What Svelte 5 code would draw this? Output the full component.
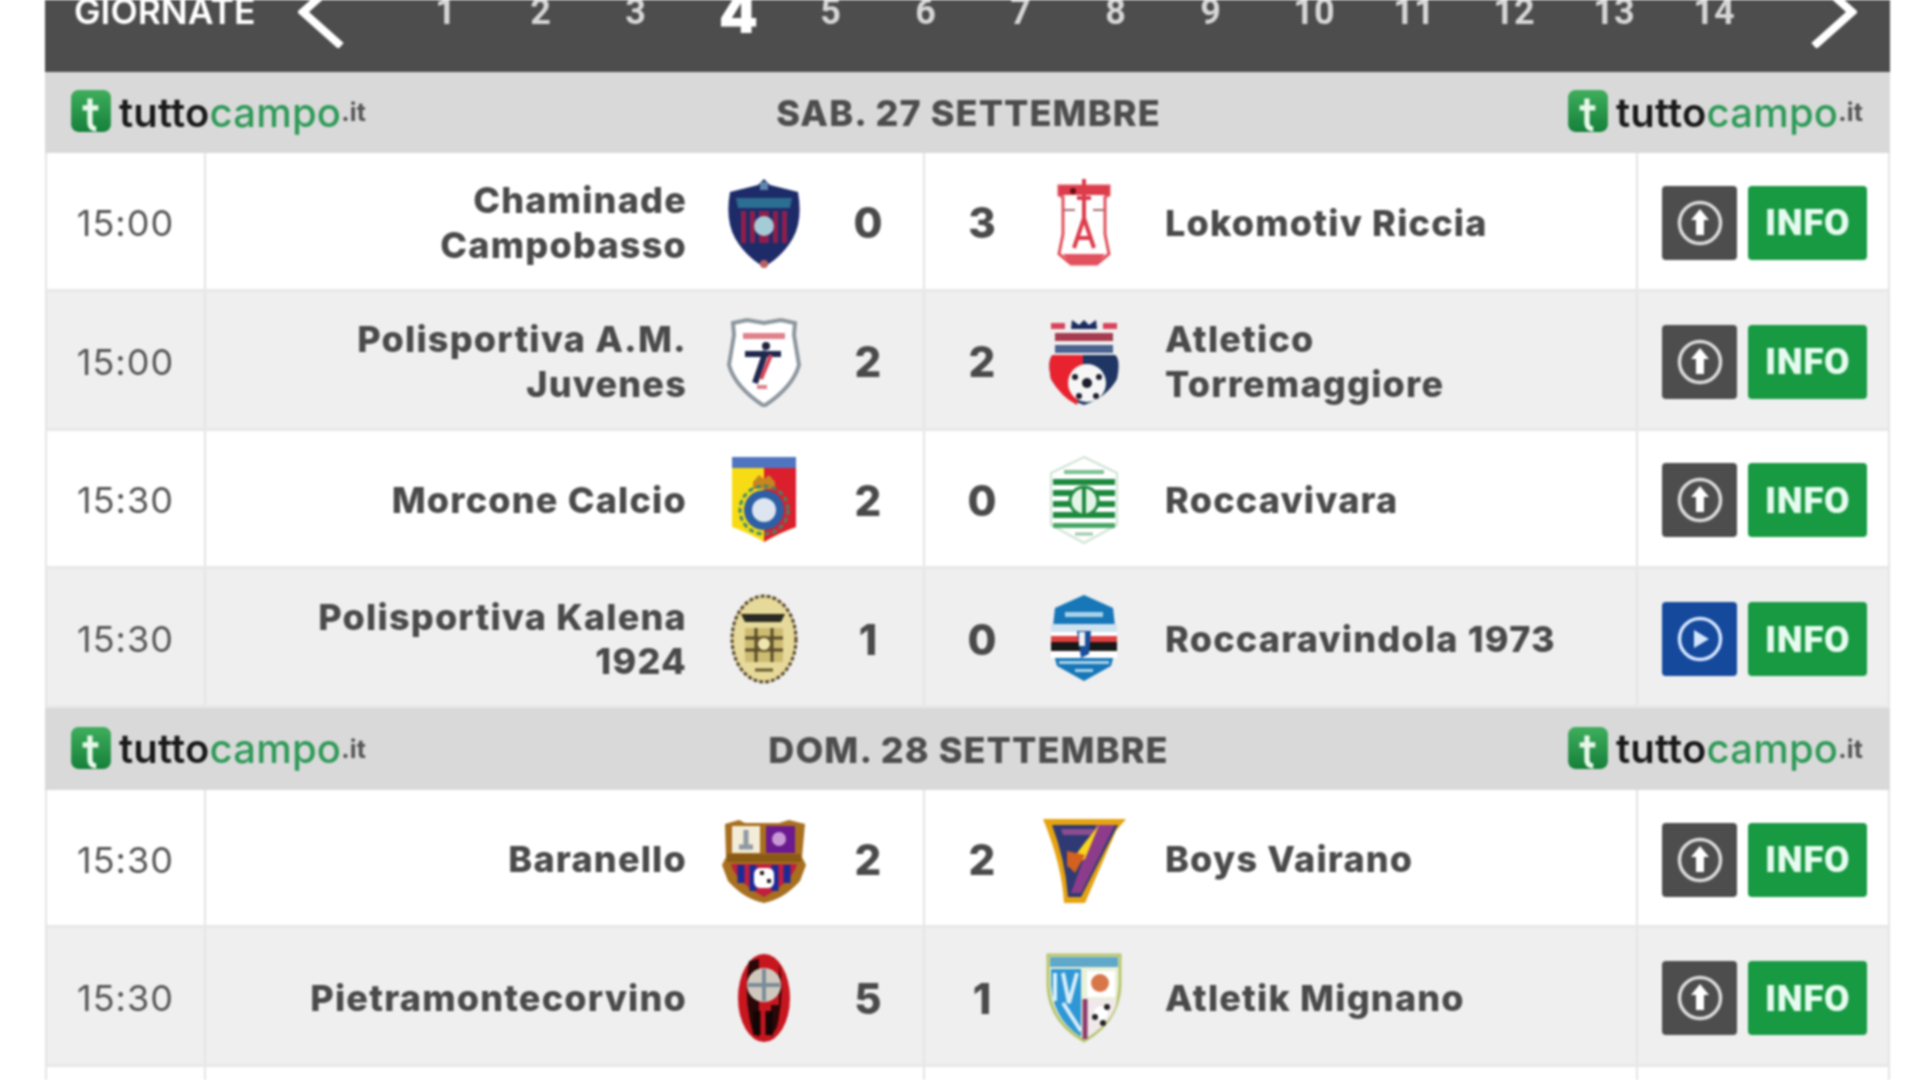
<script>
  const rounds = [1,2,3,4,5,6,7,8,9,10,11,12,13,14];
  const day1 = [
    { time:'15:00', home:['Chaminade','Campobasso'], hs:0, as:3, away:['Lokomotiv Riccia'], hc:'chaminade', ac:'lokomotiv', live:false },
    { time:'15:00', home:['Polisportiva A.M.','Juvenes'], hs:2, as:2, away:['Atletico','Torremaggiore'], hc:'juvenes', ac:'atletico', live:false },
    { time:'15:30', home:['Morcone Calcio'], hs:2, as:0, away:['Roccavivara'], hc:'morcone', ac:'roccavivara', live:false },
    { time:'15:30', home:['Polisportiva Kalena','1924'], hs:1, as:0, away:['Roccaravindola 1973'], hc:'kalena', ac:'roccaravindola', live:true },
  ];
  const day2 = [
    { time:'15:30', home:['Baranello'], hs:2, as:2, away:['Boys Vairano'], hc:'baranello', ac:'boys', live:false },
    { time:'15:30', home:['Pietramontecorvino'], hs:5, as:1, away:['Atletik Mignano'], hc:'pietra', ac:'atletik', live:false },
  ];
</script>

{#snippet logo()}
  <div class="logo">
    <svg class="logo-icon" viewBox="0 0 38 42" aria-hidden="true">
      <defs><linearGradient id="lg" x1="0" y1="0" x2="0" y2="1"><stop offset="0" stop-color="#3fae5c"/><stop offset="1" stop-color="#15803a"/></linearGradient></defs>
      <rect x="0" y="0" width="38" height="40" rx="7" fill="url(#lg)"/>
      <path d="M18 8V31Q18 37 24 37M11 17H26" fill="none" stroke="#e8f7ea" stroke-width="5"/>
    </svg>
    <span class="lt">tutto</span><span class="lc">campo</span><span class="li">.it</span>
  </div>
{/snippet}

{#snippet crest(id)}
  <svg class="crest" viewBox="0 0 90 90" aria-hidden="true">
    {#if id==='chaminade'}
      <path d="M45 1L51 7L79 14Q84 42 74 60Q64 78 45 89Q26 78 16 60Q6 42 11 14L39 7Z" fill="#1e2b69"/>
      <path d="M17 20H73L71 30H19Z" fill="#2b6e92"/>
      <rect x="22" y="33" width="46" height="32" fill="#8e1f4c"/>
      <path d="M29 33V65M38 33V65M52 33V65M61 33V65" stroke="#1e2b69" stroke-width="4"/>
      <circle cx="45" cy="48" r="10" fill="#a5ccd6"/>
      <circle cx="45" cy="86" r="4" fill="#b9635f"/>
      <rect x="41" y="4" width="8" height="8" fill="#5f86ad"/>
    {:else if id==='lokomotiv'}
      <path d="M20 8H70V17L66 19V56Q68 66 70 76L58 86H32L20 76Q22 66 24 56V19L20 17Z" fill="#fff" stroke="#e2525e" stroke-width="3"/>
      <path d="M20 8H70V17H20Z" fill="#dc3c4b"/>
      <path d="M45 1V44M38 20H52M35 70L45 40L55 70M38 60H52" stroke="#dc3c4b" stroke-width="4" fill="none"/>
      <path d="M24 32H36M54 32H66" stroke="#a86a70" stroke-width="2"/>
      <path d="M24 76H66L58 86H32Z" fill="#e2525e"/>
      <circle cx="34" cy="13" r="3" fill="#611"/>
    {:else if id==='juvenes'}
      <path d="M14 6L28 3L45 6L62 3L76 6L75 18L80 48Q74 70 45 89Q16 70 10 48L15 18Z" fill="#fff" stroke="#8d969e" stroke-width="4"/>
      <rect x="24" y="16" width="42" height="6" fill="#e0828c"/>
      <circle cx="47" cy="29" r="4" fill="#1e2440"/>
      <path d="M26 37H62M47 34L36 66" stroke="#20284e" stroke-width="6"/>
      <path d="M52 38L42 62" stroke="#d8455a" stroke-width="4"/>
      <path d="M38 70H48" stroke="#e0828c" stroke-width="4"/>
    {:else if id==='atletico'}
      <path d="M14 38H76Q82 42 78 62Q68 80 45 88Q22 80 12 62Q8 42 14 38Z" fill="#1f3563"/>
      <path d="M14 38H44V48L38 88Q22 80 12 62Q8 42 14 38Z" fill="#e8222e"/>
      <rect x="12" y="6" width="14" height="6" fill="#d8455a"/><rect x="64" y="6" width="14" height="6" fill="#d8455a"/>
      <path d="M32 12L33 3L40 8L45 3L50 8L57 3L58 12Z" fill="#1b2c5e"/>
      <rect x="16" y="16" width="58" height="8" fill="#a83b50"/>
      <rect x="16" y="28" width="58" height="8" fill="#4b638f"/>
      <circle cx="48" cy="66" r="19" fill="#f6f6f6"/>
      <circle cx="48" cy="66" r="5" fill="#1d1d2c"/><circle cx="36" cy="60" r="3" fill="#1d1d2c"/><circle cx="60" cy="60" r="3" fill="#1d1d2c"/><circle cx="40" cy="79" r="3" fill="#1d1d2c"/><circle cx="57" cy="79" r="3" fill="#1d1d2c"/>
    {:else if id==='morcone'}
      <path d="M13 2H77V72Q60 78 45 87Q30 78 13 72Z" fill="#f7dc15"/>
      <path d="M45 12H77V72Q60 78 45 87Z" fill="#dc1f2c"/>
      <rect x="13" y="2" width="64" height="11" fill="#4f74c0"/>
      <path d="M34 27L40 20L45 24L50 20L56 27V34H34Z" fill="#c9851f"/>
      <circle cx="45" cy="55" r="20" fill="#2d5fa5"/>
      <circle cx="45" cy="55" r="12" fill="#dde6f0"/>
      <circle cx="45" cy="55" r="24" fill="none" stroke="#3a8a6a" stroke-width="3" stroke-dasharray="5 3"/>
    {:else if id==='roccavivara'}
      <path d="M45 2L78 18V70L45 88L12 70V18Z" fill="#fff" stroke="#cfe3d4" stroke-width="2"/>
      <rect x="14" y="24" width="62" height="6" fill="#1e8a3f"/><rect x="14" y="35" width="62" height="6" fill="#1e8a3f"/><rect x="14" y="46" width="62" height="6" fill="#1e8a3f"/><rect x="14" y="57" width="62" height="6" fill="#1e8a3f"/><rect x="14" y="68" width="62" height="5" fill="#4aa866"/>
      <rect x="25" y="15" width="40" height="4" fill="#7cc092"/>
      <circle cx="45" cy="46" r="14" fill="#e4f4e7" stroke="#1e8a3f" stroke-width="3"/>
      <path d="M45 32V60" stroke="#1e8a3f" stroke-width="4"/>
      <path d="M36 79H54" stroke="#9cc7a8" stroke-width="3"/>
    {:else if id==='kalena'}
      <ellipse cx="45" cy="45" rx="32" ry="43" fill="#e6d99a" stroke="#5a4a2a" stroke-width="3" stroke-dasharray="4 2"/>
      <path d="M22 20H66L62 28H26Z" fill="#2a2a22"/>
      <rect x="26" y="34" width="38" height="34" fill="#cdbb72"/>
      <path d="M26 44H64M26 56H64M37 34V68M53 34V68" stroke="#574b28" stroke-width="3"/>
      <circle cx="45" cy="50" r="7" fill="#efe5ae" stroke="#6a5a2f" stroke-width="2"/>
      <path d="M36 76H54" stroke="#6a5a2f" stroke-width="3"/>
    {:else if id==='roccaravindola'}
      <path d="M45 1L74 14L78 50L72 72L45 87L18 72L12 50L16 14Z" fill="#1777b8"/>
      <rect x="12" y="30" width="66" height="8" fill="#cfe3ef"/>
      <rect x="12" y="38" width="66" height="26" fill="#fff"/>
      <rect x="12" y="42" width="66" height="6" fill="#e04040"/><rect x="12" y="48" width="66" height="9" fill="#181818"/>
      <path d="M38 37L52 37L50 60L42 64Z" fill="#1a4f9c"/>
      <rect x="40" y="38" width="6" height="14" fill="#f0f0f0"/>
      <rect x="26" y="18" width="38" height="5" fill="#a9d2ea"/><rect x="20" y="67" width="50" height="3" fill="#a9d2ea"/><rect x="36" y="75" width="18" height="3" fill="#a9d2ea"/>
    {:else if id==='baranello'}
      <path d="M6 9L20 5L26 8H60L70 5L86 9L83 42L87 50L81 66Q65 84 45 88Q25 84 9 66L3 50L7 42Z" fill="#a86f1f"/>
      <rect x="13" y="11" width="28" height="27" fill="#f3ecd8"/>
      <rect x="47" y="11" width="29" height="27" fill="#6c1a8f"/>
      <circle cx="60" cy="24" r="7" fill="#c79ad6"/>
      <path d="M27 15V32M20 32H34" stroke="#8e9aa2" stroke-width="5"/>
      <rect x="8" y="39" width="74" height="8" fill="#8a5a14"/>
      <path d="M12 49H78Q74 66 45 82Q16 66 12 49Z" fill="#c01f3e"/>
      <path d="M22 50V68M34 50V76M56 50V76M68 50V68" stroke="#1c2a98" stroke-width="7"/>
      <rect x="35" y="53" width="20" height="20" rx="6" fill="#fff"/>
      <path d="M41 58H45M48 66H52" stroke="#222" stroke-width="4"/>
    {:else if id==='boys'}
      <path d="M4 4H87L77 16L46 88H25Q23 50 4 4Z" fill="#e5a312"/>
      <path d="M13 10H79L42 82H29Q26 44 13 10Z" fill="#2f3a74"/>
      <path d="M57 10H76L42 78H32Z" fill="#8c3c8a"/>
      <path d="M22 14H55V20H24Z" fill="#8c4d90"/>
      <path d="M60 10L46 44L28 52L44 30Z" fill="#f8d51a"/>
      <path d="M28 36L46 40L36 58L28 50Z" fill="#d4611e"/>
    {:else if id==='pietra'}
      <ellipse cx="45" cy="45" rx="26" ry="44" fill="#c8161f"/>
      <path d="M30 8Q24 45 34 80L40 84V6ZM60 10Q66 40 58 74L52 84V52H60Z" fill="#2a0808"/>
      <circle cx="45" cy="32" r="17" fill="#cfc9bd"/>
      <path d="M45 16V48M29 32H61" stroke="#7b8c9a" stroke-width="4"/>
      <path d="M38 58V82M50 58V82" stroke="#120505" stroke-width="7"/>
    {:else if id==='atletik'}
      <path d="M9 2H81V32Q80 68 45 88Q10 68 9 32Z" fill="#e9f1d8" stroke="#b7c56c" stroke-width="3"/>
      <path d="M11 4H79V14H11Z" fill="#5fa8c9"/>
      <path d="M12 16H42V84Q14 66 12 32Z" fill="#2f97d6"/>
      <path d="M16 20V48M24 20L30 50L38 20M24 50L42 78" stroke="#d9eef7" stroke-width="4" fill="none"/>
      <rect x="48" y="18" width="28" height="26" fill="#fff"/>
      <circle cx="61" cy="30" r="9" fill="#d8764a"/>
      <path d="M46 46H78Q76 68 46 86Z" fill="#f0e8ea"/>
      <path d="M46 46V86" stroke="#8c3c6a" stroke-width="5"/>
      <circle cx="62" cy="60" r="7" fill="#fff"/><circle cx="56" cy="64" r="3" fill="#222"/><circle cx="68" cy="54" r="3" fill="#222"/><circle cx="64" cy="70" r="3" fill="#222"/>
    {/if}
  </svg>
{/snippet}

{#snippet matches(list)}
  {#each list as m, i}
    <div class="row" class:alt={i % 2 === 1}>
      <div class="cell time">{m.time}</div>
      <div class="cell side home">
        <div class="name">{#each m.home as l}<div>{l}</div>{/each}</div>
        <div class="crest-box">{@render crest(m.hc)}</div>
        <div class="score">{m.hs}</div>
      </div>
      <div class="cell side away">
        <div class="score">{m.as}</div>
        <div class="crest-box">{@render crest(m.ac)}</div>
        <div class="name">{#each m.away as l}<div>{l}</div>{/each}</div>
      </div>
      <div class="cell actions">
        <div class="btn media" class:live={m.live}>
          <svg viewBox="0 0 48 48" aria-hidden="true">
            <circle cx="24" cy="24" r="20.5" fill="none" stroke="currentColor" stroke-width="3.5"/>
            {#if m.live}
              <path d="M18 15L33 24L18 33Z" fill="currentColor"/>
            {:else}
              <path d="M24 10L33 21H28V36H20V21H15Z" fill="#fff"/>
            {/if}
          </svg>
        </div>
        <div class="btn info">INFO</div>
      </div>
    </div>
  {/each}
{/snippet}

<div class="page">
  <div class="board">
    <nav class="rounds">
      <span class="label">GIORNATE</span>
      <svg class="chev" viewBox="0 0 46 72" aria-hidden="true"><path d="M43 2L5 36L43 70" fill="none" stroke="#fff" stroke-width="8"/></svg>
      <div class="nums">
        {#each rounds as r}<span class="num" class:on={r === 4} class:wide={r >= 10} class:ten={r === 10}>{r}</span>{/each}
      </div>
      <svg class="chev" viewBox="0 0 46 72" aria-hidden="true"><path d="M3 2L41 36L3 70" fill="none" stroke="#fff" stroke-width="8"/></svg>
    </nav>
    <div class="day">{@render logo()}<h2>SAB. 27 SETTEMBRE</h2>{@render logo()}</div>
    {@render matches(day1)}
    <div class="day">{@render logo()}<h2>DOM. 28 SETTEMBRE</h2>{@render logo()}</div>
    {@render matches(day2)}
    <div class="row"><div class="cell time"></div><div class="cell side"></div><div class="cell side"></div><div class="cell actions"></div></div>
  </div>
</div>

<style>
  :global(body){margin:0;background:#fff}
  .page{width:1920px;height:1080px;overflow:hidden;background:#fff;font-family:Roboto,"Liberation Sans",sans-serif;filter:blur(.8px)}
  .board{width:1845px;margin-left:45px;margin-top:-24px}
  .rounds{height:95.5px;background:#4d4d4d;display:flex;align-items:flex-start;box-sizing:border-box;padding-left:29px;color:#fff}
  .label{font-family:Inter,sans-serif;font-size:35.5px;font-weight:600;line-height:72px;width:224px;flex:none}
  .chev{width:46px;height:72px;flex:none}
  .nums{display:flex;flex:1;align-items:center;height:72px;padding-left:54px;color:#d6d6d6;font-size:36px;font-weight:700}
  .num{width:95px;flex:none;text-align:center}
  .num.wide{width:100px}
  .num.ten{margin-left:6px}
  .num.on{width:111px;margin-right:-11px;color:#fff;font-family:Inter,sans-serif;font-size:56px;font-weight:900;line-height:72px;position:relative;top:1px}
  .rounds .chev:last-child{margin-right:33px}
  .day{height:81.5px;background:#d9d9d9;display:flex;align-items:center;justify-content:space-between;padding:0 24px 0 26px;box-sizing:border-box}
  .day h2{margin:0;font-family:Inter,sans-serif;font-size:36px;font-weight:800;letter-spacing:1.1px;color:#4d4d4d;padding-top:2px}
  .logo{display:flex;align-items:center;width:298px;font-family:Inter,sans-serif;font-size:40px;font-weight:500;letter-spacing:.2px}
  .logo-icon{width:40px;height:44px;margin-right:8px;flex:none}
  .lt{color:#1a1a1a;font-weight:600}.lc{color:#2f9a58}.li{color:#555;font-size:25px;font-weight:700;align-self:flex-end;line-height:56px}
  .row{height:138.8px;display:grid;grid-template-columns:159px 719px 713px 1fr;box-sizing:border-box;background:#fff;border-left:2px solid #e4e4e4;border-right:2px solid #e4e4e4;border-bottom:3px solid #e8e8e8}
  .row.alt{background:#efefef}
  .cell{display:flex;align-items:center;border-right:2px solid #e4e4e4;box-sizing:border-box;padding-top:4px}
  .time{justify-content:center;font-family:Inter,sans-serif;font-size:36px;letter-spacing:1px;color:#555}
  .side{color:#4a4a4a;font-weight:800}
  .home{justify-content:flex-end}
  .name{font-family:Inter,sans-serif;font-size:36px;line-height:44.5px;letter-spacing:1.2px}
  .home .name{text-align:right}
  .crest-box{width:90px;height:90px;flex:none}
  .home .crest-box{margin-left:32px;margin-right:4px}
  .away .crest-box{margin-right:36px}
  .crest{display:block;width:90px;height:90px}
  .score{font-family:Inter,sans-serif;font-size:42px;font-weight:800;text-align:center;flex:none}
  .home .score{width:110px}
  .away .score{width:114px}
  .actions{border-right:0;padding-left:24px;gap:11px}
  .btn{height:74px;border-radius:4px;display:flex;align-items:center;justify-content:center;box-sizing:border-box}
  .media{width:75px;background:#4d4d4d;color:#ddd}
  .media.live{background:#14499c;color:#d5e6ff}
  .media svg{width:48px;height:48px}
  .info{width:119px;background:#179a42;color:#e6fbef;font-size:37px;font-weight:900;letter-spacing:.5px}
</style>
